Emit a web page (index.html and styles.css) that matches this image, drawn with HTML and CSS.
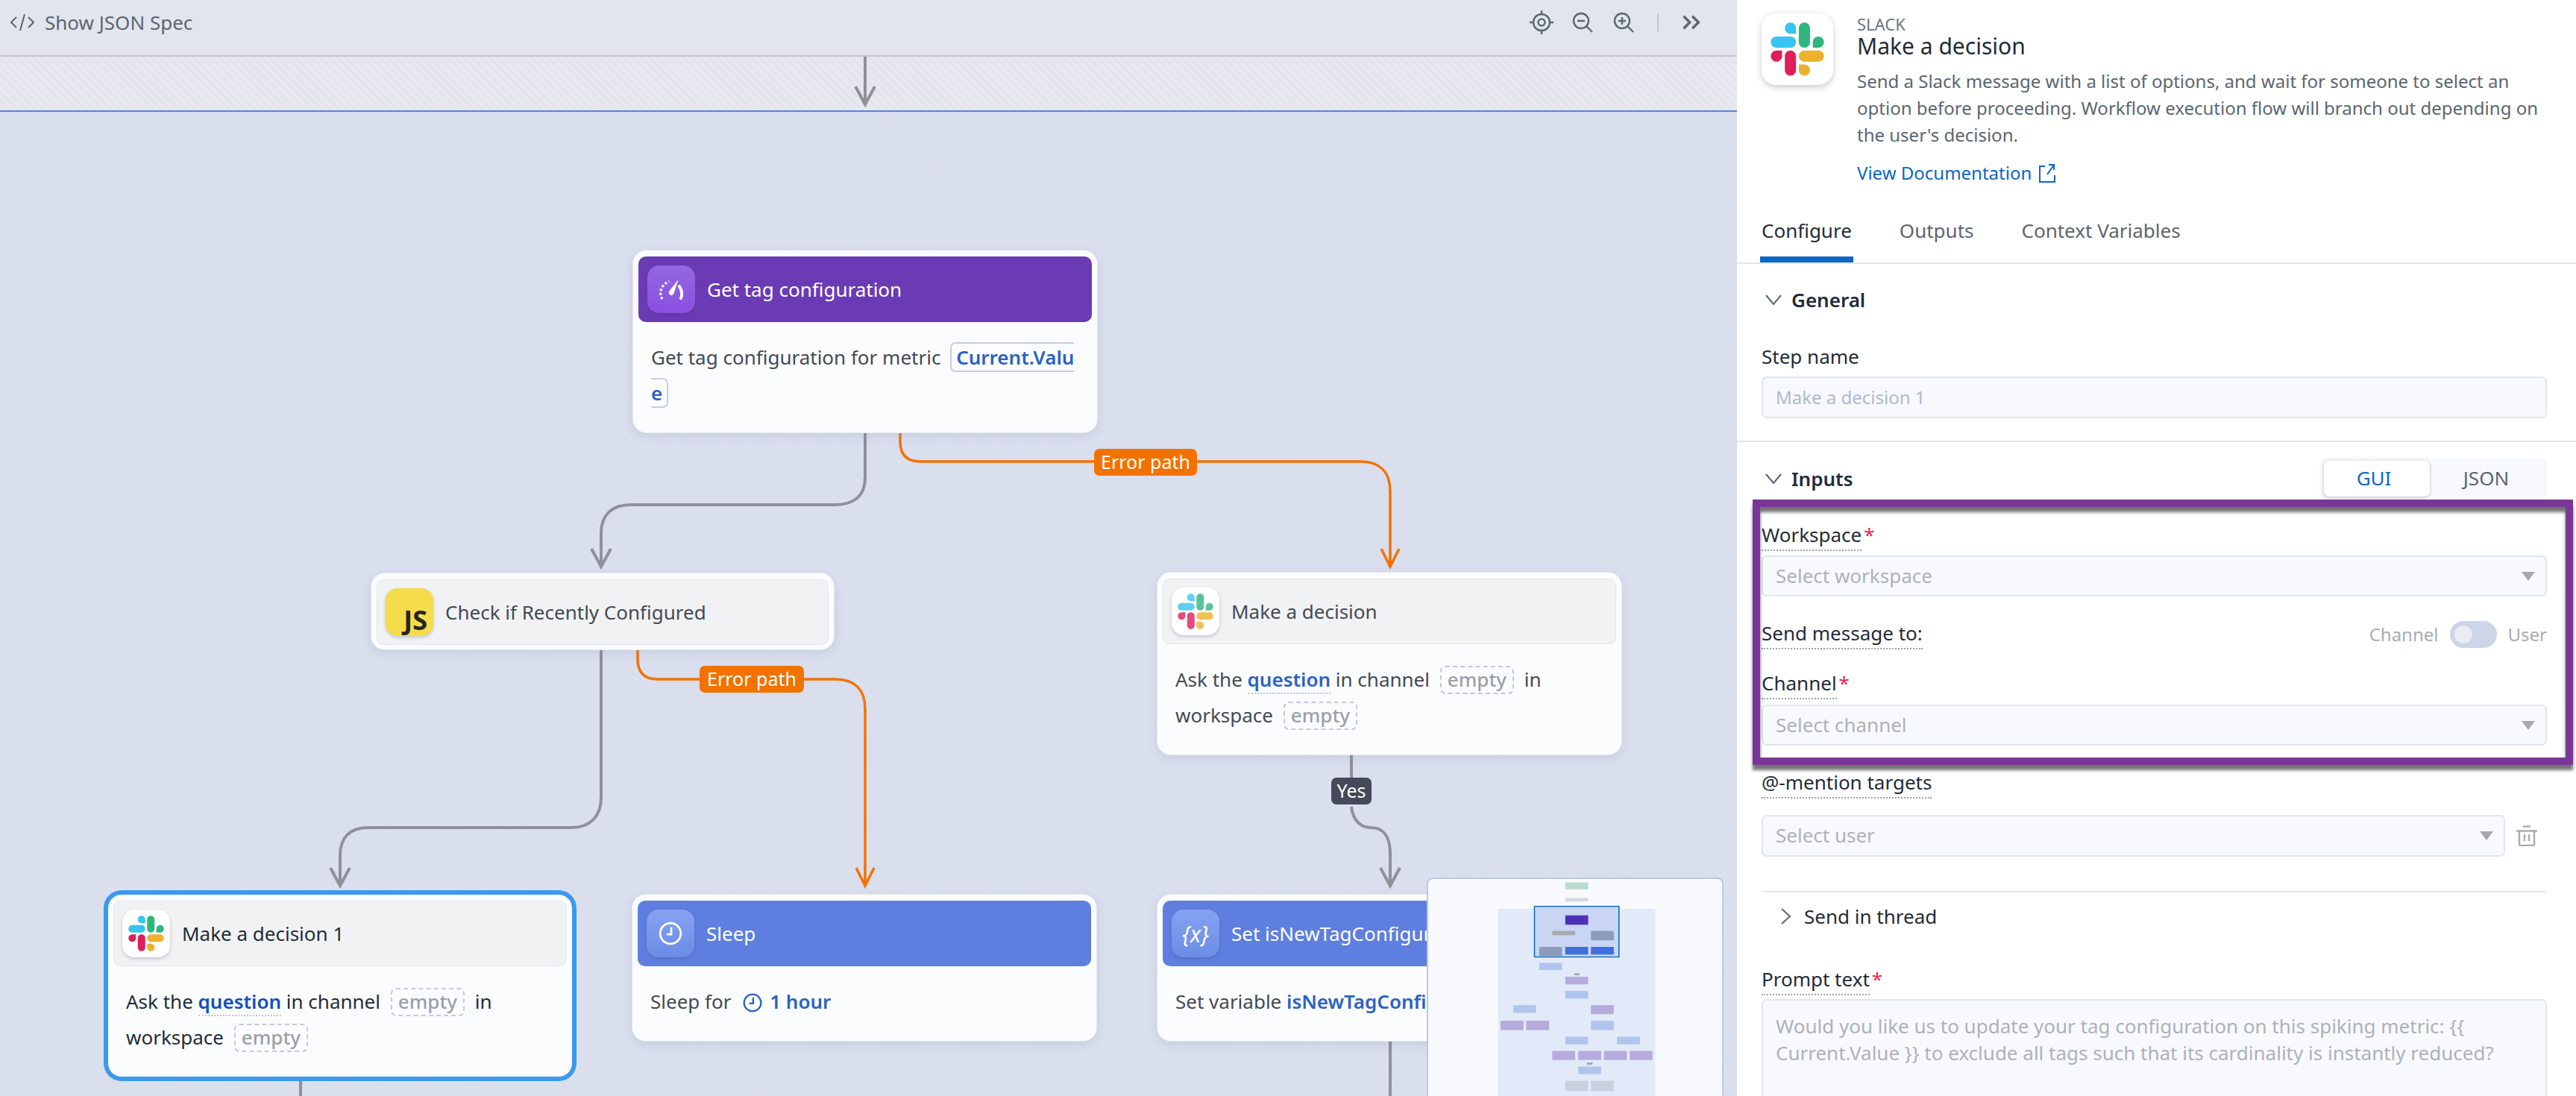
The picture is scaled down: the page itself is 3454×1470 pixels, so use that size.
FILE: index.html
```html
<!DOCTYPE html>
<html lang="en">
<head>
    <meta charset="UTF-8">
    <title>Make a decision - Workflow</title>
    <link rel="stylesheet" href="styles.css">
</head>
<body>
    <svg class="defs" width="0" height="0">
        <symbol id="slack" viewBox="0 0 127 127">
            <path d="M27.2 80c0 7.3-5.9 13.2-13.2 13.2C6.7 93.2.8 87.3.8 80c0-7.3 5.9-13.2 13.2-13.2h13.2V80zm6.6 0c0-7.3 5.9-13.2 13.2-13.2 7.3 0 13.2 5.9 13.2 13.2v33c0 7.3-5.9 13.2-13.2 13.2-7.3 0-13.2-5.9-13.2-13.2V80z" fill="#E01E5A"/>
            <path d="M47 27c-7.3 0-13.2-5.9-13.2-13.2C33.8 6.5 39.7.6 47 .6c7.3 0 13.2 5.9 13.2 13.2V27H47zm0 6.7c7.3 0 13.2 5.9 13.2 13.2 0 7.3-5.9 13.2-13.2 13.2H13.9C6.6 60.1.7 54.2.7 46.9c0-7.3 5.9-13.2 13.2-13.2H47z" fill="#36C5F0"/>
            <path d="M99.9 46.9c0-7.3 5.9-13.2 13.2-13.2 7.3 0 13.2 5.9 13.2 13.2 0 7.3-5.9 13.2-13.2 13.2H99.9V46.9zm-6.6 0c0 7.3-5.9 13.2-13.2 13.2-7.3 0-13.2-5.9-13.2-13.2V13.8C66.9 6.5 72.8.6 80.1.6c7.3 0 13.2 5.9 13.2 13.2v33.1z" fill="#2EB67D"/>
            <path d="M80.1 99.8c7.3 0 13.2 5.9 13.2 13.2 0 7.3-5.9 13.2-13.2 13.2-7.3 0-13.2-5.9-13.2-13.2V99.8h13.2zm0-6.6c-7.3 0-13.2-5.9-13.2-13.2 0-7.3 5.9-13.2 13.2-13.2h33.1c7.3 0 13.2 5.9 13.2 13.2 0 7.3-5.9 13.2-13.2 13.2H80.1z" fill="#ECB22E"/>
        </symbol>
        <symbol id="clock" viewBox="0 0 32 32">
            <circle cx="16" cy="16" r="13" fill="none" stroke="currentColor" stroke-width="2.6"/>
            <path d="M17 8v9h-6" fill="none" stroke="currentColor" stroke-width="2.6"/>
        </symbol>
    </svg>

    <div class="canvas">
        <div class="toolbar">
            <div class="spec-btn">
                <svg class="spec-icon" viewBox="0 0 32 24"><path d="M8 5l-7 7 7 7M24 5l7 7-7 7M19 1l-6 22" fill="none" stroke="currentColor" stroke-width="2"/></svg>
                <span>Show JSON Spec</span>
            </div>
            <div class="tools">
                <svg class="tool" viewBox="0 0 32 32"><g fill="none" stroke="currentColor" stroke-width="2.4"><circle cx="16" cy="16" r="11"/><circle cx="16" cy="16" r="4.5"/><path d="M16 0v5M16 27v5M0 16h5M27 16h5"/></g></svg>
                <svg class="tool" viewBox="0 0 32 32"><g fill="none" stroke="currentColor" stroke-width="2.4"><circle cx="14" cy="14" r="10"/><path d="M21 21l8 8M9 14h10"/></g></svg>
                <svg class="tool" viewBox="0 0 32 32"><g fill="none" stroke="currentColor" stroke-width="2.4"><circle cx="14" cy="14" r="10"/><path d="M21 21l8 8M9 14h10M14 9v10"/></g></svg>
                <span class="tool-sep"></span>
                <svg class="tool tool-last" viewBox="0 0 24 24"><path d="M3 5l7 7-7 7M13 5l7 7-7 7" fill="none" stroke="currentColor" stroke-width="3"/></svg>
            </div>
        </div>
        <div class="band"></div>
        <div class="stage"></div>

        <svg class="edges" width="2329" height="1470" fill="none">
            <g class="edge-gray">
                <path d="M1160 76V140M1147 116l13 24 13-24"/>
                <path d="M1160 580V640C1160 665 1145 677 1120 677H846C821 677 806 690 806 715V760M793 736l13 24 13-24"/>
                <path d="M806 870V1070C806 1095 791 1110 766 1110H494C469 1110 456 1123 456 1148V1188M443 1164l13 24 13-24"/>
                <path d="M1812 1012V1050M1812 1082C1814 1102 1826 1110 1838 1110C1856 1110 1864 1124 1864 1145V1188M1851 1164l13 24 13-24"/>
                <path d="M1864 1396V1470M403 1450V1470"/>
            </g>
            <g class="edge-orange">
                <path d="M1207 580V592C1207 610 1216 619 1234 619H1824C1850 619 1864 633 1864 659V760M1852 736l12 24 12-24"/>
                <path d="M855 870V884C855 902 864 911 882 911H1120C1146 911 1160 925 1160 951V1188M1148 1164l12 24 12-24"/>
            </g>
        </svg>

        <div class="edge-label label-err-a">Error path</div>
        <div class="edge-label label-err-b">Error path</div>
        <div class="edge-label label-yes">Yes</div>

        <div class="node node-tag">
            <div class="node-head head-purple">
                <span class="node-icon icon-purple">
                    <svg viewBox="0 0 33 27" width="33" height="27" fill="none" stroke="#fff"><path d="M4 26C-1 18 2 7 13 2.500" stroke-width="3.200" stroke-dasharray="3 2.600"/><path d="M25 1L14 15c-3 4 2 8 5 4z" fill="#fff" stroke-width=".6"/><path d="M27 9c3 5 4 11 2 16" stroke-width="4" stroke-linecap="round"/></svg>
                </span>
                <span class="node-title">Get tag configuration</span>
            </div>
            <div class="node-body">Get tag configuration for metric <span class="token">Current.Value</span></div>
        </div>

        <div class="node node-check">
            <div class="node-head head-gray">
                <span class="node-icon icon-js">JS</span>
                <span class="node-title">Check if Recently Configured</span>
            </div>
        </div>

        <div class="node node-decide">
            <div class="node-head head-gray">
                <span class="node-icon icon-white"><svg class="faded" width="48" height="48"><use href="#slack"/></svg></span>
                <span class="node-title">Make a decision</span>
            </div>
            <div class="node-body">Ask the <span class="field">question</span> in channel <span class="empty">empty</span> in workspace <span class="empty">empty</span></div>
        </div>

        <div class="node node-selected">
            <div class="node-head head-gray">
                <span class="node-icon icon-white"><svg width="48" height="48"><use href="#slack"/></svg></span>
                <span class="node-title">Make a decision 1</span>
            </div>
            <div class="node-body">Ask the <span class="field">question</span> in channel <span class="empty">empty</span> in workspace <span class="empty">empty</span></div>
        </div>

        <div class="node node-sleep">
            <div class="node-head head-blue">
                <span class="node-icon icon-blue"><svg width="34" height="34"><use href="#clock"/></svg></span>
                <span class="node-title">Sleep</span>
            </div>
            <div class="node-body">Sleep for <svg class="inline-clock" width="28" height="28"><use href="#clock"/></svg><span class="value">1 hour</span></div>
        </div>

        <div class="node node-set">
            <div class="node-head head-blue">
                <span class="node-icon icon-blue icon-var">{x}</span>
                <span class="node-title">Set isNewTagConfigured</span>
            </div>
            <div class="node-body">Set variable <span class="value">isNewTagConfigured</span></div>
        </div>

        <div class="minimap">
            <svg class="mini-svg" viewBox="780 938 752 630" preserveAspectRatio="none">
                <rect class="m-green" x="1131" y="952" width="58" height="20"/>
                <rect class="m-gray" x="1131" y="997" width="58" height="10"/>
                <rect class="m-bg" x="961" y="1028" width="398" height="540"/>
                <rect class="m-view" x="1053" y="1021" width="214" height="146"/>
                <rect class="m-dark" x="1131" y="1047" width="58" height="27"/>
                <rect class="m-mid" x="1098" y="1092" width="58" height="12"/>
                <rect class="m-slate" x="1196" y="1092" width="58" height="27"/>
                <rect class="m-slate" x="1065" y="1138" width="58" height="27"/>
                <rect class="m-strong" x="1131" y="1138" width="58" height="22"/>
                <rect class="m-strong" x="1196" y="1138" width="58" height="22"/>
                <rect class="m-blue" x="1065" y="1184" width="58" height="21"/>
                <rect class="m-mid" x="1153" y="1214" width="14" height="6"/>
                <rect class="m-purple" x="1131" y="1224" width="58" height="22"/>
                <rect class="m-blue" x="1131" y="1265" width="58" height="22"/>
                <rect class="m-blue" x="999" y="1306" width="58" height="22"/>
                <rect class="m-purple" x="1196" y="1306" width="58" height="26"/>
                <rect class="m-purple" x="967" y="1351" width="58" height="27"/>
                <rect class="m-purple" x="1032" y="1351" width="58" height="27"/>
                <rect class="m-blue" x="1196" y="1351" width="58" height="27"/>
                <rect class="m-blue" x="1131" y="1397" width="58" height="22"/>
                <rect class="m-blue" x="1262" y="1397" width="58" height="22"/>
                <rect class="m-purple" x="1098" y="1438" width="58" height="26"/>
                <rect class="m-purple" x="1164" y="1438" width="58" height="26"/>
                <rect class="m-purple" x="1229" y="1438" width="58" height="26"/>
                <rect class="m-purple" x="1294" y="1438" width="58" height="26"/>
                <rect class="m-mid" x="1186" y="1471" width="14" height="7"/>
                <rect class="m-blue" x="1164" y="1483" width="58" height="22"/>
                <rect class="m-gray2" x="1131" y="1524" width="58" height="30"/>
                <rect class="m-gray2" x="1196" y="1524" width="58" height="30"/>
            </svg>
        </div>
    </div>

    <div class="panel">
        <div class="panel-head">
            <span class="panel-logo"><svg width="72" height="72"><use href="#slack"/></svg></span>
            <div class="panel-info">
                <div class="kicker">SLACK</div>
                <div class="panel-title">Make a decision</div>
                <p class="panel-desc">Send a Slack message with a list of options, and wait for someone to select an option before proceeding. Workflow execution flow will branch out depending on the user's decision.</p>
                <a class="doc-link" href="#">View Documentation
                    <svg width="22" height="26" viewBox="0 0 22 26" fill="none" stroke="currentColor" stroke-width="2"><path d="M8 4H1v21h20v-9M11 15L20 2M13 2h7v7"/></svg>
                </a>
            </div>
        </div>

        <div class="tabs">
            <div class="tab tab-active">Configure</div>
            <div class="tab">Outputs</div>
            <div class="tab">Context Variables</div>
        </div>

        <div class="section section-general">
            <div class="section-row">
                <svg class="chev" viewBox="0 0 22 14"><path d="M1 1l10 12L21 1" fill="none" stroke="currentColor" stroke-width="2"/></svg>
                <span class="section-name">General</span>
            </div>
            <div class="step-label">Step name</div>
            <div class="input input-name">Make a decision 1</div>
        </div>

        <div class="section section-inputs">
            <div class="section-row">
                <svg class="chev" viewBox="0 0 22 14"><path d="M1 1l10 12L21 1" fill="none" stroke="currentColor" stroke-width="2"/></svg>
                <span class="section-name">Inputs</span>
                <div class="segmented">
                    <span class="seg seg-on">GUI</span>
                    <span class="seg">JSON</span>
                </div>
            </div>

            <div class="field-row first-field"><span class="label">Workspace</span><span class="req">*</span></div>
            <div class="input select select-ws">Select workspace</div>

            <div class="field-row send-row">
                <span class="label">Send message to:</span>
                <div class="switch-wrap">
                    <span>Channel</span>
                    <span class="switch"><span class="knob"></span></span>
                    <span>User</span>
                </div>
            </div>

            <div class="field-row channel-row"><span class="label">Channel</span><span class="req">*</span></div>
            <div class="input select select-ch">Select channel</div>

            <div class="field-row mention-row"><span class="label">@-mention targets</span></div>
            <div class="user-row">
                <div class="input select">Select user</div>
                <svg class="trash" viewBox="0 0 28 28" fill="none" stroke="currentColor" stroke-width="2.400"><path d="M9 1.500h10M0 7.500h28M4 7.500v18c0 1 .5 1.500 1.500 1.500h17c1 0 1.500-.5 1.500-1.500v-18M11 12v9M17 12v9"/></svg>
            </div>

            <div class="divider"></div>
            <div class="thread-row">
                <svg class="chev-side" viewBox="0 0 14 22"><path d="M1 1l11 10L1 21" fill="none" stroke="currentColor" stroke-width="2"/></svg>
                <span>Send in thread</span>
            </div>

            <div class="field-row prompt-row"><span class="label">Prompt text</span><span class="req">*</span></div>
            <div class="input textarea">Would you like us to update your tag configuration on this spiking metric: {{ Current.Value }} to exclude all tags such that its cardinality is instantly reduced?</div>
        </div>

        <div class="highlight"></div>
    </div>
</body>
</html>
```

FILE: styles.css
```css
* {
    box-sizing: border-box;
}
html, body {
    margin: 0;
    height: 1470px;
    overflow: hidden;
}
body {
    display: flex;
    font-family: "Noto Sans", sans-serif;
    font-size: 26px;
    color: #1f2c38;
    background: #fff;
}
.defs {
    position: absolute;
}

/* left side: workflow canvas */
.canvas {
    position: relative;
    width: 2329px;
    height: 1470px;
    overflow: hidden;
    display: flex;
    flex-direction: column;
    flex-shrink: 0;
}
.toolbar {
    height: 76px;
    flex-shrink: 0;
    display: flex;
    justify-content: space-between;
    padding: 14px 47px 0 14px;
    background: #e2e5ee;
    border-bottom: 2px solid #c3c5d0;
    color: #5b6670;
}
.spec-btn {
    display: flex;
    align-items: flex-start;
    gap: 14px;
    line-height: 32px;
}
.spec-icon {
    width: 32px;
    height: 24px;
    margin-top: 4px;
}
.tools {
    display: flex;
    align-items: flex-start;
    gap: 23px;
}
.tool {
    width: 32px;
    height: 32px;
}
.tool-sep {
    width: 2px;
    height: 24px;
    margin: 4px 0 0 6px;
    background: #c3c5d0;
}
.tool-last {
    width: 28px;
    height: 28px;
    margin: 2px 0 0 7px;
}
.band {
    height: 74px;
    flex-shrink: 0;
    border-bottom: 2px solid #5f80de;
    background: repeating-linear-gradient(45deg, #e3e5ed 0 4px, #e8e9ef 4px 8px);
}
.stage {
    flex: 1;
    background: repeating-linear-gradient(45deg, #d9deed 0 4px, #dbdfee 4px 8px);
}
.edges {
    position: absolute;
    left: 0;
    top: 0;
}
.edge-gray {
    stroke: #8f9099;
    stroke-width: 4;
}
.edge-orange {
    stroke: #f27200;
    stroke-width: 3.5;
}
.edge-label {
    position: absolute;
    height: 36px;
    line-height: 34px;
    border-radius: 7px;
    text-align: center;
    font-size: 25px;
    color: #fff;
    background: #f27200;
}
.label-err-a {
    left: 1467px;
    top: 602px;
    width: 138px;
}
.label-err-b {
    left: 938px;
    top: 893px;
    width: 140px;
}
.label-yes {
    left: 1785px;
    top: 1043px;
    width: 54px;
    background: #454959;
}

/* nodes */
.node {
    position: absolute;
    width: 622px;
    padding: 8px 7px;
    background: #fbfcfe;
    border-radius: 18px;
    box-shadow: 0 0 0 1px #e6e8f1, 0 4px 14px rgba(120, 130, 170, .22);
    color: #434a53;
}
.node-tag {
    left: 849px;
    top: 336px;
}
.node-check {
    left: 498px;
    top: 769px;
    width: 620px;
    height: 102px;
}
.node-decide {
    left: 1552px;
    top: 768px;
}
.node-selected {
    left: 145px;
    top: 1200px;
    color: #1f2c38;
    box-shadow: 0 0 0 6px #3b99ec;
}
.node-sleep {
    left: 848px;
    top: 1200px;
}
.node-set {
    left: 1552px;
    top: 1200px;
}
.node-head {
    height: 88px;
    display: flex;
    align-items: center;
    gap: 16px;
    padding: 0 12px;
    border-radius: 10px;
    overflow: hidden;
}
.head-purple {
    background: #6a3bb5;
    color: #fff;
}
.head-blue {
    background: #5e7fe0;
    color: #fff;
}
.head-gray {
    background: #f1f2f3;
    box-shadow: inset 0 0 0 1px #e4e6ea;
}
.node-title {
    white-space: nowrap;
}
.node-icon {
    width: 64px;
    height: 64px;
    flex-shrink: 0;
    display: flex;
    align-items: center;
    justify-content: center;
    border-radius: 16px;
    box-shadow: 0 2px 4px rgba(60, 60, 100, .25);
}
.icon-purple {
    background: linear-gradient(#9468e0, #8a4fe0);
}
.icon-blue {
    background: linear-gradient(#86a2f2, #6b8ce6);
    color: #fff;
}
.icon-white {
    background: #fff;
}
.icon-js {
    background: #f5dc4b;
    color: #262626;
    font-size: 36px;
    font-weight: 700;
    line-height: 36px;
    align-items: flex-end;
    justify-content: flex-end;
    padding: 0 8px 3px 0;
}
.icon-var {
    font-style: italic;
    font-size: 30px;
}
.faded {
    opacity: .8;
}
.node-body {
    padding: 23px 17px 21px;
    line-height: 48px;
}
.token {
    margin-left: 6px;
    padding: 0 6px;
    border: 2px solid #c7cde2;
    border-radius: 7px;
    font-weight: 600;
    color: #2a62c4;
    word-break: break-all;
}
.field {
    font-weight: 600;
    color: #2a62c4;
    border-bottom: 2px dotted #c0c5d6;
}
.node-selected .field {
    color: #0f4fc4;
}
.empty {
    display: inline-block;
    height: 38px;
    line-height: 32px;
    margin: 0 7px;
    padding: 0 8px;
    border: 2px dashed #c5c8da;
    border-radius: 7px;
    font-weight: 500;
    color: #9b9fa8;
}
.value {
    font-weight: 600;
    color: #2a62c4;
}
.inline-clock {
    margin: 0 9px 0 8px;
    vertical-align: -6px;
    color: #2a62c4;
}

/* minimap */
.minimap {
    position: absolute;
    left: 1913px;
    top: 1177px;
    width: 398px;
    height: 300px;
    background: #f8fafe;
    border: 2px solid #bfc6dd;
    border-radius: 8px 8px 0 0;
    overflow: hidden;
}
.mini-svg {
    display: block;
    width: 398px;
    height: 293px;
    margin: -2px;
}
.m-green { fill: #b9dccd; }
.m-gray { fill: #d3d8e0; }
.m-gray2 { fill: #c9d1e0; }
.m-bg { fill: #e2eaf9; }
.m-view { fill: #c9d5f3; stroke: #0d6bc4; stroke-width: 3; }
.m-dark { fill: #4f2fb5; }
.m-mid { fill: #a8a9b0; }
.m-slate { fill: #8e9cbc; }
.m-strong { fill: #3f6fdc; }
.m-blue { fill: #b0c4ee; }
.m-purple { fill: #b6abdc; }

/* right side: step configuration */
.panel {
    position: relative;
    flex: 1;
    height: 1470px;
    overflow: hidden;
    background: #fff;
}
.panel-head {
    display: flex;
    gap: 32px;
    padding: 18px 33px 0;
}
.panel-logo {
    width: 96px;
    height: 96px;
    flex-shrink: 0;
    display: flex;
    align-items: center;
    justify-content: center;
    border-radius: 20px;
    background: #fff;
    box-shadow: 0 3px 8px rgba(60, 60, 90, .28);
}
.panel-info {
    font-size: 24px;
}
.kicker {
    font-size: 22px;
    line-height: 28px;
    color: #6b7680;
}
.panel-title {
    margin-top: -4px;
    font-size: 30px;
    line-height: 40px;
}
.panel-desc {
    margin: 9px 0 0;
    line-height: 36px;
    color: #5b6670;
}
.doc-link {
    display: flex;
    align-items: center;
    gap: 10px;
    margin-top: 15px;
    line-height: 36px;
    color: #0a66c2;
    text-decoration: none;
}
.tabs {
    display: flex;
    gap: 60px;
    margin-top: 20px;
    padding: 0 31px;
    border-bottom: 2px solid #e2e4ef;
}
.tab {
    padding: 21px 2px 17px;
    line-height: 36px;
    border-bottom: 8px solid transparent;
    color: #5b6670;
}
.tab-active {
    color: #1f2c38;
    border-bottom-color: #0a66c2;
}
.section {
    padding: 0 39px 0 33px;
}
.section-general {
    padding-top: 30px;
    padding-bottom: 30px;
    border-bottom: 2px solid #e2e4ef;
}
.section-row {
    display: flex;
    align-items: center;
    height: 36px;
}
.section-inputs .section-row {
    height: 56px;
    margin-top: 21px;
}
.chev {
    width: 22px;
    height: 14px;
    margin: 0 13px 0 5px;
    color: #5b6670;
}
.section-name {
    font-weight: 600;
}
.step-label {
    margin-top: 40px;
    line-height: 36px;
}
.input {
    height: 56px;
    margin-top: 9px;
    padding: 0 17px;
    line-height: 50px;
    border: 2px solid #e3e5ef;
    border-radius: 7px;
    background: #f8f9fc;
    color: #aeb2b8;
}
.input-name {
    font-size: 24px;
    line-height: 52px;
    color: #b0b8d0;
}
.segmented {
    display: flex;
    margin-left: auto;
    width: 305px;
    height: 56px;
    padding: 4px 6px;
    background: #f8f9fc;
    border-radius: 7px;
}
.seg {
    flex: 1;
    line-height: 46px;
    text-align: center;
    color: #5b6670;
}
.seg-on {
    flex: 0 0 142px;
    padding-right: 8px;
    background: #fff;
    border-radius: 7px;
    color: #0a66c2;
    box-shadow: 0 1px 4px rgba(60, 60, 90, .35);
}
.field-row {
    display: flex;
    align-items: flex-start;
    line-height: 32px;
}
.label {
    padding-bottom: 4px;
    border-bottom: 2px dotted #9da3ad;
}
.req {
    margin-left: 3px;
    color: #e8274b;
}
.first-field {
    margin-top: 31px;
}
.select {
    position: relative;
}
.select::after {
    content: "";
    position: absolute;
    right: 14px;
    top: 20px;
    border-left: 9px solid transparent;
    border-right: 9px solid transparent;
    border-top: 12px solid #a5a9ae;
}
.select-ws {
    margin-top: 6px;
    height: 55px;
}
.select-ch {
    margin-top: 7px;
    height: 55px;
}
.send-row {
    margin-top: 33px;
    justify-content: space-between;
}
.switch-wrap {
    display: flex;
    align-items: center;
    gap: 15px;
    font-size: 24px;
    color: #a9adb3;
}
.switch {
    width: 63px;
    height: 36px;
    padding: 6px;
    border-radius: 18px;
    background: #cfd5e8;
}
.knob {
    display: block;
    width: 24px;
    height: 24px;
    border-radius: 50%;
    background: #e9ecf5;
}
.channel-row {
    margin-top: 29px;
}
.mention-row {
    margin-top: 33px;
}
.user-row {
    display: flex;
    align-items: center;
    gap: 15px;
    margin-top: 22px;
}
.user-row .input {
    flex: 1;
    margin-top: 0;
}
.trash {
    width: 28px;
    height: 28px;
    margin-right: 13px;
    color: #a9adb3;
}
.divider {
    height: 2px;
    margin-top: 46px;
    background: #e2e4ef;
}
.thread-row {
    display: flex;
    align-items: center;
    gap: 17px;
    margin-top: 14px;
    padding-left: 26px;
    line-height: 36px;
}
.chev-side {
    width: 14px;
    height: 22px;
    color: #5b6670;
}
.prompt-row {
    margin-top: 50px;
}
.textarea {
    height: 220px;
    margin-top: 5px;
    padding-top: 16px;
    line-height: 36px;
}
.highlight {
    position: absolute;
    left: 21px;
    top: 670px;
    width: 1100px;
    height: 356px;
    border: 10px solid #7a3696;
    box-shadow: 0 7px 4px rgba(0, 0, 0, .55), inset 0 7px 4px rgba(0, 0, 0, .55);
}
```
